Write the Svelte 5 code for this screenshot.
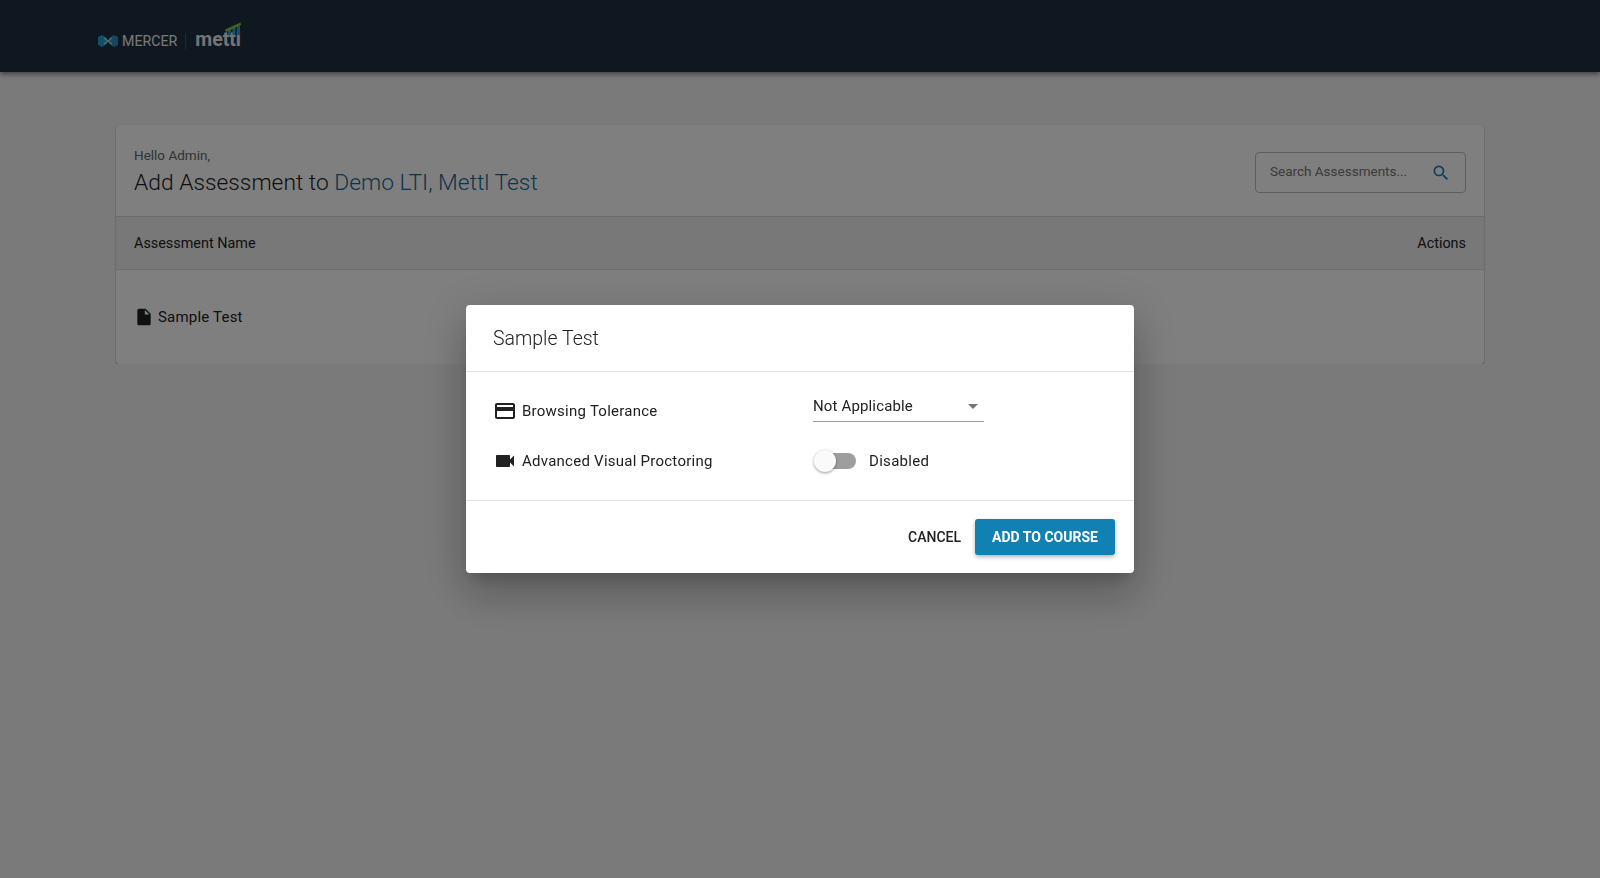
<script>
  let search = "";
  let proctoring = false;
</script>

<header class="topbar">
  <div class="logo">
    <svg class="mark" width="20" height="12" viewBox="0 0 20 12">
      <path d="M0 2 L4 0 L9 3 L9 9 L4 12 L0 10Z" fill="#2a9fc4" />
      <path d="M20 2 L16 0 L11 3 L11 9 L16 12 L20 10Z" fill="#2f8fb5" />
      <path d="M6 3 L14 9 M14 3 L6 9" stroke="#a8d8e6" stroke-width="1.500" fill="none" />
    </svg>
    <span class="mercer">MERCER</span>
    <span class="sep"></span>
    <span class="mettl">mettl
      <svg class="bars" width="17" height="13" viewBox="0 0 17 13">
        <rect x="4" y="6" width="3" height="7" fill="#2a9fd0" />
        <rect x="8.500" y="5" width="3" height="8" fill="#2a9fd0" />
        <rect x="13" y="4" width="3" height="9" fill="#2a9fd0" />
        <path d="M1 7.500 L2 10 L17 3 L16.500 0.500Z" fill="#8ec23f" />
      </svg>
    </span>
  </div>
</header>

<main class="page">
  <section class="card">
    <div class="card-head">
      <div class="greeting">
        <div class="hello">Hello Admin,</div>
        <h1>Add Assessment to <span class="course">Demo LTI, Mettl Test</span></h1>
      </div>
      <label class="search">
        <input placeholder="Search Assessments..." bind:value={search} />
        <svg width="20" height="20" viewBox="0 0 24 24" fill="#1a7fb5">
          <path d="M15.5 14h-.79l-.28-.27A6.47 6.47 0 0 0 16 9.5 6.5 6.5 0 1 0 9.5 16c1.61 0 3.09-.59 4.23-1.57l.27.28v.79l5 4.99L20.49 19l-4.99-5zm-6 0C7.01 14 5 11.99 5 9.5S7.01 5 9.5 5 14 7.01 14 9.5 11.99 14 9.5 14z" />
        </svg>
      </label>
    </div>
    <div class="table-head">
      <span>Assessment Name</span>
      <span>Actions</span>
    </div>
    <div class="row">
      <svg width="20" height="20" viewBox="0 0 24 24" fill="#212121">
        <path d="M14 2H6c-1.1 0-2 .9-2 2v16c0 1.1.9 2 2 2h12c1.1 0 2-.9 2-2V8l-6-6zm-1 7V3.5L18.500 9H13z" />
      </svg>
      <span>Sample Test</span>
    </div>
  </section>
</main>

<div class="backdrop">
  <div class="modal">
    <div class="modal-title">Sample Test</div>
    <div class="modal-body">
      <div class="field">
        <div class="label">
          <svg width="24" height="24" viewBox="0 0 24 24" fill="#212121">
            <path d="M20 4H4c-1.11 0-2 .89-2 2v12c0 1.110.89 2 2 2h16c1.110 0 2-.89 2-2V6c0-1.110-.89-2-2-2zm0 14H4v-6h16v6zm0-10H4V6h16v2z" />
          </svg>
          <span>Browsing Tolerance</span>
        </div>
        <div class="select">
          <span>Not Applicable</span>
          <i class="caret"></i>
        </div>
      </div>
      <div class="field second">
        <div class="label">
          <svg width="24" height="24" viewBox="0 0 24 24" fill="#212121">
            <path d="M17 10.500V7c0-.55-.45-1-1-1H4c-.55 0-1 .45-1 1v10c0 .55.45 1 1 1h12c.55 0 1-.45 1-1v-3.500l4 4v-11l-4 4z" />
          </svg>
          <span>Advanced Visual Proctoring</span>
        </div>
        <div class="toggle-wrap">
          <button class="toggle" aria-label="toggle" on:click={() => (proctoring = !proctoring)}>
            <span class="knob"></span>
          </button>
          <span>Disabled</span>
        </div>
      </div>
    </div>
    <div class="modal-foot">
      <button class="cancel">CANCEL</button>
      <button class="add">ADD TO COURSE</button>
    </div>
  </div>
</div>

<style>
  :global(body) {
    margin: 0;
    background: #f5f5f5;
    font-family: Roboto, "Liberation Sans", sans-serif;
    color: #212121;
  }

  .topbar {
    height: 72px;
    background: #1f3042;
    display: flex;
    align-items: center;
    padding-left: 98px;
    box-shadow: 0 2px 5px rgba(0, 0, 0, 0.5);
  }

  .logo {
    display: flex;
    align-items: center;
    margin-top: 10px;
  }

  .mark {
    margin-right: 4px;
  }

  .mercer {
    font-size: 14.200px;
    color: #f0f0f0;
  }

  .sep {
    width: 1px;
    height: 16px;
    background: #47525e;
    margin: 0 9px 0 8px;
  }

  .mettl {
    position: relative;
    font-size: 19.500px;
    font-weight: 700;
    color: #e8e8e8;
    line-height: 1;
    margin-top: -3px;
  }

  .bars {
    position: absolute;
    right: 0;
    top: -8px;
  }

  .page {
    padding: 53px 116px 0;
  }

  .card {
    background: #fff;
    border-radius: 4px;
    box-shadow: 0 1px 2px rgba(0, 0, 0, 0.4);
  }

  .card-head {
    height: 91px;
    padding: 0 18px;
    display: flex;
    justify-content: space-between;
    align-items: center;
    border-bottom: 1px solid #d6d6d6;
  }

  .greeting {
    padding-top: 1px;
  }

  .hello {
    font-size: 13.500px;
    color: #666;
    margin-top: 4px;
  }

  h1 {
    margin: 4px 0 0;
    font-size: 22.800px;
    font-weight: 300;
    line-height: 32px;
    color: #212121;
  }

  .course {
    color: #146a96;
  }

  .search {
    width: 211px;
    height: 41px;
    margin-top: 4px;
    box-sizing: border-box;
    border: 1px solid #bdbdbd;
    border-radius: 4px;
    display: flex;
    align-items: center;
    padding: 0 14px;
  }

  .search input {
    flex: 1;
    min-width: 0;
    padding: 0;
    margin-top: -3px;
    border: 0;
    outline: 0;
    background: none;
    font: 13.500px Roboto, sans-serif;
  }

  .search input::placeholder {
    color: #757575;
    opacity: 1;
  }

  .table-head {
    height: 52px;
    padding: 0 18px;
    display: flex;
    justify-content: space-between;
    align-items: center;
    background: #f0f0f0;
    border-bottom: 1px solid #d6d6d6;
    font-size: 14.400px;
  }

  .row {
    height: 94px;
    padding: 0 18px;
    display: flex;
    align-items: center;
    gap: 4px;
    font-size: 15px;
    letter-spacing: 0.2px;
  }

  .backdrop {
    position: fixed;
    inset: 0;
    background: rgba(0, 0, 0, 0.5);
    display: flex;
    align-items: center;
    justify-content: center;
  }

  .modal {
    width: 668px;
    height: 268px;
    background: #fff;
    border-radius: 4px;
    display: flex;
    flex-direction: column;
    box-shadow: 0 11px 15px -7px rgba(0, 0, 0, 0.2), 0 24px 38px 3px rgba(0, 0, 0, 0.14), 0 9px 46px 8px rgba(0, 0, 0, 0.12);
  }

  .modal-title {
    height: 66px;
    padding-left: 27px;
    display: flex;
    align-items: center;
    font-size: 19.500px;
    font-weight: 300;
    border-bottom: 1px solid #e0e0e0;
  }

  .modal-body {
    height: 129px;
    padding: 21px 27px 0;
    box-sizing: border-box;
    border-bottom: 1px solid #e0e0e0;
  }

  .field {
    display: flex;
    height: 36px;
  }

  .second {
    margin-top: 14px;
  }

  .label {
    width: 320px;
    display: flex;
    align-items: center;
    gap: 5px;
    font-size: 15px;
    letter-spacing: 0.25px;
  }

  .select {
    width: 171px;
    height: 29px;
    box-sizing: border-box;
    border-bottom: 1px solid #9e9e9e;
    display: flex;
    justify-content: space-between;
    align-items: center;
    padding-right: 6px;
    padding-bottom: 2px;
    font-size: 15px;
    letter-spacing: 0.15px;
  }

  .caret {
    width: 0;
    height: 0;
    border-left: 5px solid transparent;
    border-right: 5px solid transparent;
    border-top: 5px solid #757575;
  }

  .toggle-wrap {
    display: flex;
    align-items: center;
    gap: 13px;
    font-size: 15px;
    letter-spacing: 0.3px;
  }

  .toggle {
    position: relative;
    width: 40px;
    height: 16px;
    margin-left: 3px;
    padding: 0;
    border: 0;
    border-radius: 8px;
    background: #9e9e9e;
  }

  .knob {
    position: absolute;
    left: -2px;
    top: -3px;
    width: 22px;
    height: 22px;
    border-radius: 50%;
    background: #fafafa;
    box-shadow: 0 1px 3px rgba(0, 0, 0, 0.4);
  }

  .modal-foot {
    flex: 1;
    display: flex;
    justify-content: flex-end;
    align-items: center;
    gap: 14px;
    padding: 0 19px;
  }

  button {
    font-family: Roboto, sans-serif;
    cursor: pointer;
  }

  .cancel {
    border: 0;
    background: none;
    padding: 0;
    font-size: 14px;
    font-weight: 500;
    color: #212121;
  }

  .add {
    width: 140px;
    height: 36px;
    border: 0;
    border-radius: 3px;
    background: #1180b3;
    color: #fff;
    font-size: 14px;
    font-weight: 700;
    box-shadow: 0 2px 4px rgba(0, 0, 0, 0.3);
  }
</style>
